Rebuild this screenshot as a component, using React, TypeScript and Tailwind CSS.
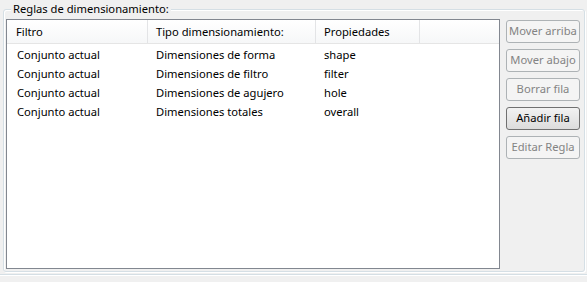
import React from "react";

const rows = [
  { filtro: "Conjunto actual", tipo: "Dimensiones de forma", prop: "shape" },
  { filtro: "Conjunto actual", tipo: "Dimensiones de filtro", prop: "filter" },
  { filtro: "Conjunto actual", tipo: "Dimensiones de agujero", prop: "hole" },
  { filtro: "Conjunto actual", tipo: "Dimensiones totales", prop: "overall" },
];

const buttons = [
  { label: "Mover arriba", enabled: false },
  { label: "Mover abajo", enabled: false },
  { label: "Borrar fila", enabled: false },
  { label: "Añadir fila", enabled: true },
  { label: "Editar Regla", enabled: false },
];

const App = () => {
  return (
    <div className="w-[587px] h-[282px] bg-[#f0f0f0] font-['Noto_Sans',sans-serif] text-[11.2px] text-black overflow-hidden">
      <div className="relative ml-[3px] mt-[9px] w-[582px] h-[263px] border border-[#d5dfe5] rounded-[3px] shadow-[inset_1px_1px_0_#fff,1px_1px_0_#fff]">
        <span className="absolute left-[7px] -top-[9px] px-[2px] bg-[#f0f0f0] leading-[16px] whitespace-nowrap">
          Reglas de dimensionamiento:
        </span>
        <div className="flex gap-[6px] pl-[2px] pt-[9px]">
          <div className="w-[494px] h-[250px] bg-white border border-[#828790]">
            <div className="flex h-[24px] bg-gradient-to-b from-white to-[#f6f7f8] border-b border-[#e5e5e5] leading-[23px]">
              <div className="w-[141px] pl-[9px] border-r border-[#e3e4e6]">Filtro</div>
              <div className="w-[168px] pl-[8px] border-r border-[#e3e4e6]">Tipo dimensionamiento:</div>
              <div className="w-[104px] pl-[8px] border-r border-[#e3e4e6]">Propiedades</div>
            </div>
            <div className="pt-[1px]">
              {rows.map((r, i) => (
                <div key={i} className="flex h-[19px] leading-[19px] whitespace-nowrap">
                  <div className="w-[141px] pl-[10px]">{r.filtro}</div>
                  <div className="w-[168px] pl-[8px]">{r.tipo}</div>
                  <div className="w-[104px] pl-[8px]">{r.prop}</div>
                </div>
              ))}
            </div>
          </div>
          <div className="flex flex-col gap-[6px] pt-[1px]">
            {buttons.map((b) => (
              <div
                key={b.label}
                className={
                  b.enabled
                    ? "w-[74px] h-[23px] flex items-center justify-center whitespace-nowrap rounded-[3px] border border-[#707070] bg-gradient-to-b from-[#f2f2f2] to-[#dcdcdc] text-black"
                    : "w-[74px] h-[23px] flex items-center justify-center whitespace-nowrap rounded-[3px] border border-[#adb2b5] bg-[#f4f4f4] text-[#838383]"
                }
              >
                {b.label}
              </div>
            ))}
          </div>
        </div>
      </div>
      <div className="mt-[2px] h-[2px] border-t border-[#d5dfe5] border-b border-b-white" />
    </div>
  );
};

export default App;
